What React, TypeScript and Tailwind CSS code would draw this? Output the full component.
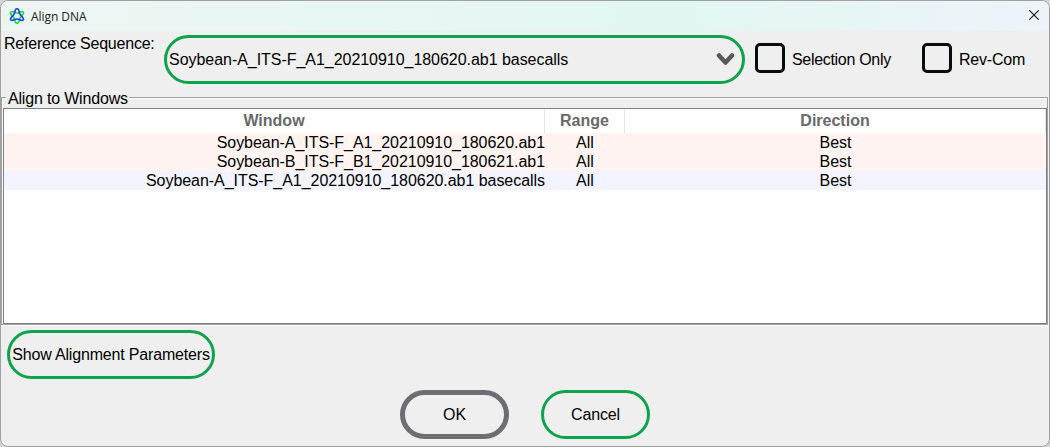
const rows = [
  { name: "Soybean-A_ITS-F_A1_20210910_180620.ab1", tint: "bg-[#fff4f2]" },
  { name: "Soybean-B_ITS-F_B1_20210910_180621.ab1", tint: "bg-[#fff4f2]" },
  { name: "Soybean-A_ITS-F_A1_20210910_180620.ab1 basecalls", tint: "bg-[#f3f4ff]" },
];

function Logo() {
  return (
    <svg width="16" height="16" viewBox="0 0 16 16" fill="none" strokeWidth="1.6" strokeLinejoin="round">
      <path d="M8 15.2Q6.3 15.2 5.9 12.4Q5.3 9.4 3 7.4Q.9 5.2 1.7 4.2Q2.8 2.9 5 4.2Q8 5.8 11 4.2Q13.2 2.9 14.3 4.2Q15.1 5.2 13 7.4Q10.7 9.4 10.1 12.4Q9.7 15.2 8 15.2Z" stroke="#14e035" />
      <path d="M8 .8Q6.3 .8 5.9 3.6Q5.3 6.6 3 8.6Q.9 10.8 1.7 11.8Q2.8 13.1 5 11.8Q8 10.2 11 11.8Q13.2 13.1 14.3 11.8Q15.1 10.8 13 8.6Q10.7 6.6 10.1 3.6Q9.7 .8 8 .8Z" stroke="#1540f0" />
    </svg>
  );
}

function Check({ label, className }: { label: string; className: string }) {
  return (
    <label className={`flex h-[30px] items-center gap-[7px] ${className}`}>
      <span className="size-[30px] shrink-0 rounded-[5px] border-3 border-[#080c0a]" />
      <span className="pt-[2px]">{label}</span>
    </label>
  );
}

export default function App() {
  return (
    <div className="h-[447px] w-[1050px] overflow-hidden bg-[#d5d5d5] font-['Liberation_Sans',Arial,sans-serif] text-[16px] leading-[19px] whitespace-nowrap text-black">
      <div className="flex h-[447px] w-[1050px] flex-col overflow-hidden rounded-[8px] border border-[#a0a0a0] bg-[#efefef]">
        <header className="flex h-[30px] shrink-0 items-center bg-linear-to-r from-[#eef6f4] via-[#e2f7f2] via-65% to-[#eef3f9] pr-[10px] pl-2">
          <Logo />
          <span className="ml-[6px] font-['Open_Sans',sans-serif] text-[12px] tracking-[-0.06px] text-[#202020]">Align DNA</span>
          <svg className="mb-[2px] ml-auto" width="10" height="10" viewBox="0 0 10 10" stroke="#151515" strokeWidth="1.1">
            <path d="m.3.3 9.4 9.4m0-9.4L.3 9.7" />
          </svg>
        </header>
        <div className="flex h-[61px] shrink-0 items-start pt-[4px] pl-[3px]">
          <span className="mt-[-1px] w-[160px] tracking-[-0.22px]">Reference Sequence:</span>
          <div className="flex h-[49px] w-[581px] items-center justify-between rounded-full border-[3px] border-[#0fa34e] pr-[7px] pl-[2px]">
            <span className="tracking-[-0.04px]">Soybean-A_ITS-F_A1_20210910_180620.ab1 basecalls</span>
            <svg className="mb-[2px]" width="19" height="14" viewBox="0 0 19 14" fill="none" stroke="#58595b" strokeWidth="4.5" strokeLinecap="round" strokeLinejoin="round">
              <path d="m3 3.5 6.5 7 6.5-7" />
            </svg>
          </div>
          <Check label="Selection Only" className="mt-[8px] ml-[10px] w-[167px] tracking-[-0.31px]" />
          <Check label="Rev-Com" className="mt-[8px] tracking-[-0.2px]" />
        </div>
        <section className="flex h-[234px] shrink-0 flex-col pr-px">
          <div className="flex h-4 shrink-0 items-start">
            <div className="mt-[5px] h-[11px] w-[5px] border-t border-l border-[#a0a0a0] shadow-[inset_1px_1px_0_white]" />
            <h2 className="mr-px ml-[2px] mt-[-3px] tracking-[-0.18px]">Align to Windows</h2>
            <div className="mt-[5px] h-[11px] grow border-t border-r border-[#a0a0a0] shadow-[inset_0_1px_0_white]" />
          </div>
          <div className="flex h-[217px] flex-col border-r border-b border-l border-[#a0a0a0] bg-white">
            <div className="ml-px h-[216px] border border-[#7d8089] bg-white">
              <div className="grid h-6 grid-cols-[541px_80px_1fr] text-center leading-[24px] font-bold text-[#696969]">
                <span className="border-r border-[#e5e5e5]">Window</span>
                <span className="border-r border-[#e5e5e5]">Range</span>
                <span className="border-r border-[#e5e5e5]">Direction</span>
              </div>
              {rows.map((row) => (
                <div key={row.name} className={`grid h-[19px] grid-cols-[541px_80px_1fr] text-center ${row.tint}`}>
                  <span className="text-right tracking-[-0.045px]">{row.name}</span>
                  <span>All</span>
                  <span>Best</span>
                </div>
              ))}
            </div>
          </div>
          <div className="h-px bg-white" />
        </section>
        <button className="mt-[4px] ml-[6px] flex h-[49px] w-[208px] shrink-0 items-center justify-center rounded-full border-[3px] border-[#0fa34e] tracking-[-0.17px]">
          Show Alignment Parameters
        </button>
        <div className="mt-[11px] ml-[399px] flex gap-[32px]">
          <button className="h-[49px] w-[109px] rounded-full border-[5px] border-[#6d6e71]">OK</button>
          <button className="h-[49px] w-[109px] rounded-full border-[3px] border-[#0fa34e] tracking-[-0.15px]">Cancel</button>
        </div>
      </div>
    </div>
  );
}
